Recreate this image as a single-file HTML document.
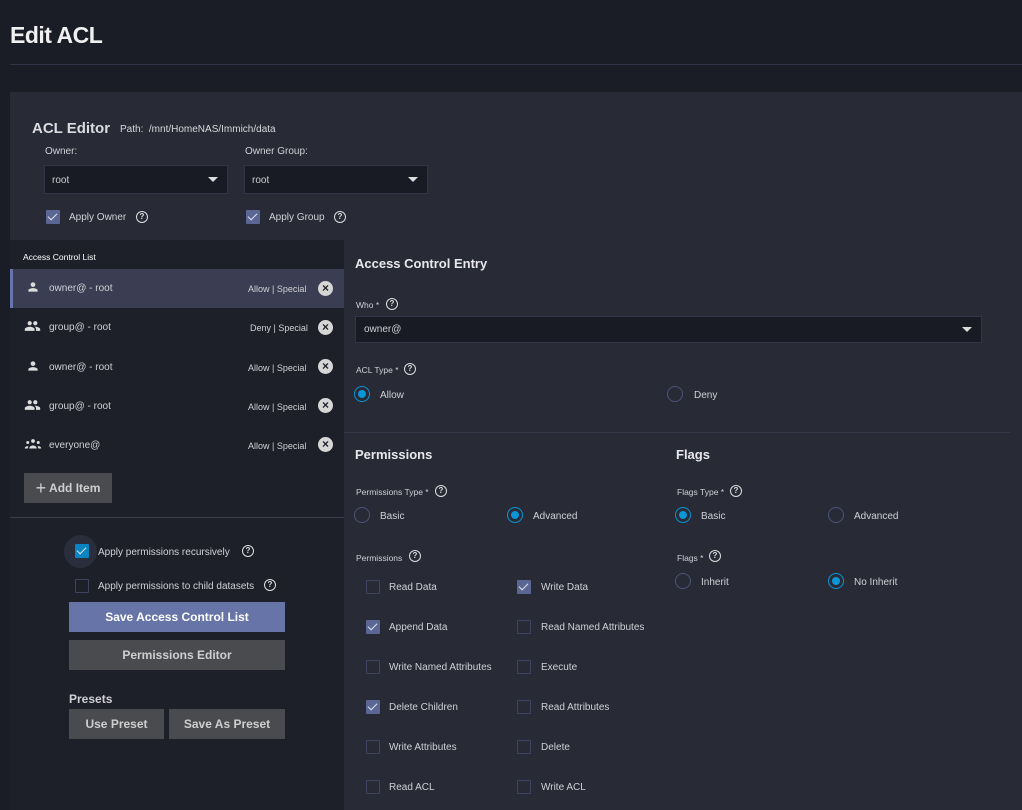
<!DOCTYPE html>
<html><head><meta charset="utf-8"><style>
*{box-sizing:border-box;margin:0;padding:0}
body{width:1022px;height:810px;background:#1a1c26;font-family:"Liberation Sans",sans-serif;color:#d8d8dc;position:relative;overflow:hidden;font-size:10px}
.a{position:absolute}
.t{position:absolute;white-space:nowrap}
.lbl,.sm{margin-top:1px}
.cb{position:absolute;width:14px;height:14px;border:1.5px solid #3e4461;border-radius:1px}
.cb.on{background:#5a6693;border-color:#5a6693}
.cb.on::after{content:"";position:absolute;left:3px;top:0px;width:4px;height:8px;border:solid #e0e4f0;border-width:0 1.5px 1.5px 0;transform:rotate(45deg)}
.rd{position:absolute;width:16px;height:16px;border:1.5px solid #4d5478;border-radius:50%;margin-top:-1px}
.rd.on{border-color:#0a95d6}
.rd.on::after{content:"";position:absolute;left:2.5px;top:2.5px;width:8px;height:8px;border-radius:50%;background:#0a95d6}
.q{position:absolute;width:12px;height:12px;border:1.3px solid #ddd;border-radius:50%;font-size:8px;line-height:10px;text-align:center;color:#ddd;font-weight:bold}
.sel{position:absolute;background:#181a24;border:1px solid #33364a}
.arr{position:absolute;width:0;height:0;border-left:5px solid transparent;border-right:5px solid transparent;border-top:5px solid #ddd}
.x{position:absolute;width:15px;height:15px;border-radius:50%;background:#d6d6d6;color:#1e2029;font-size:12px;font-weight:bold;text-align:center;line-height:15px}
.btn{position:absolute;background:#4a4b4f;color:#cfcfcf;font-weight:bold;font-size:12px;text-align:center}
.lbl{font-size:11px;color:#d0d0d6}
.h{font-weight:bold;font-size:13px;color:#e8e8ec}
.sm{font-size:9px;color:#d0d0d6}
</style></head><body>
<div class="t" style="left:10px;top:22px;font-size:23px;font-weight:bold;color:#f0f0f0;letter-spacing:-0.5px">Edit ACL</div>
<div class="a" style="left:10px;top:64px;right:0;height:1px;background:#32354a"></div>
<div class="a" style="left:10px;top:92px;right:0;bottom:0;background:#282a36"></div>

<div class="t" style="left:32px;top:120px;font-size:15px;font-weight:bold;color:#dcdce0">ACL Editor</div>
<div class="t" style="left:120px;top:124px;font-size:10px;color:#d8d8dc">Path:&nbsp; /mnt/HomeNAS/Immich/data</div>
<div class="t sm" style="left:45px;top:145px;font-size:10px">Owner:</div>
<div class="t sm" style="left:245px;top:145px;font-size:10px">Owner Group:</div>
<div class="sel" style="left:44px;top:165px;width:184px;height:29px"></div>
<div class="t lbl" style="left:52px;top:174px;font-size:10px">root</div>
<div class="arr" style="left:208px;top:177px"></div>
<div class="sel" style="left:244px;top:165px;width:184px;height:29px"></div>
<div class="t lbl" style="left:252px;top:174px;font-size:10px">root</div>
<div class="arr" style="left:408px;top:177px"></div>
<div class="cb on" style="left:46px;top:210px"></div>
<div class="t lbl" style="left:69px;top:211px;font-size:10px">Apply Owner</div>
<div class="q" style="left:136px;top:211px">?</div>
<div class="cb on" style="left:246px;top:210px"></div>
<div class="t lbl" style="left:269px;top:211px;font-size:10px">Apply Group</div>
<div class="q" style="left:334px;top:211px">?</div>

<div class="a" style="left:10px;top:240px;width:334px;height:570px;background:#1e2029"></div>
<div class="t" style="left:23px;top:252px;font-size:8.5px;color:#fff">Access Control List</div>
<div class="a" style="left:10px;top:269px;width:334px;height:39px;background:#3b3e52;border-left:3px solid #6675ad"></div>
<svg class="a" style="left:26px;top:280px" width="14" height="14" viewBox="0 0 24 24" fill="#ddd"><path d="M12 12c2.2 0 4-1.8 4-4s-1.8-4-4-4-4 1.8-4 4 1.8 4 4 4zm0 2c-2.7 0-8 1.3-8 4v2h16v-2c0-2.7-5.3-4-8-4z"/></svg>
<div class="t lbl" style="left:49px;top:282px;font-size:10px">owner@ - root</div>
<div class="t sm" style="left:248px;top:283px">Allow | Special</div><div class="x" style="left:318px;top:281px">×</div>

<svg class="a" style="left:24px;top:319px" width="17" height="14" viewBox="0 0 24 20" fill="#ddd"><path d="M16 9c1.7 0 3-1.3 3-3s-1.3-3-3-3-3 1.3-3 3 1.3 3 3 3zm-8 0c1.7 0 3-1.3 3-3S9.7 3 8 3 5 4.3 5 6s1.3 3 3 3zm0 2c-2.3 0-7 1.2-7 3.5V17h14v-2.5C15 12.2 10.3 11 8 11zm8 0c-.3 0-.6 0-1 .1 1.2.8 2 1.9 2 3.4V17h6v-2.5c0-2.3-4.7-3.5-7-3.5z"/></svg>
<div class="t lbl" style="left:49px;top:321px;font-size:10px">group@ - root</div>
<div class="t sm" style="left:250px;top:322px">Deny | Special</div><div class="x" style="left:318px;top:320px">×</div>

<svg class="a" style="left:26px;top:359px" width="14" height="14" viewBox="0 0 24 24" fill="#ddd"><path d="M12 12c2.2 0 4-1.8 4-4s-1.8-4-4-4-4 1.8-4 4 1.8 4 4 4zm0 2c-2.7 0-8 1.3-8 4v2h16v-2c0-2.7-5.3-4-8-4z"/></svg>
<div class="t lbl" style="left:49px;top:361px;font-size:10px">owner@ - root</div>
<div class="t sm" style="left:248px;top:362px">Allow | Special</div><div class="x" style="left:318px;top:359px">×</div>

<svg class="a" style="left:24px;top:398px" width="17" height="14" viewBox="0 0 24 20" fill="#ddd"><path d="M16 9c1.7 0 3-1.3 3-3s-1.3-3-3-3-3 1.3-3 3 1.3 3 3 3zm-8 0c1.7 0 3-1.3 3-3S9.7 3 8 3 5 4.3 5 6s1.3 3 3 3zm0 2c-2.3 0-7 1.2-7 3.5V17h14v-2.5C15 12.2 10.3 11 8 11zm8 0c-.3 0-.6 0-1 .1 1.2.8 2 1.9 2 3.4V17h6v-2.5c0-2.3-4.7-3.5-7-3.5z"/></svg>
<div class="t lbl" style="left:49px;top:400px;font-size:10px">group@ - root</div>
<div class="t sm" style="left:248px;top:401px">Allow | Special</div><div class="x" style="left:318px;top:398px">×</div>

<svg class="a" style="left:24px;top:438px" width="18" height="12" viewBox="0 0 24 16" fill="#ddd"><circle cx="12" cy="4" r="2.5"/><circle cx="5" cy="6" r="2"/><circle cx="19" cy="6" r="2"/><path d="M7 14c0-2.5 2.5-4 5-4s5 1.5 5 4zM1 14c0-1.6 1.5-3 3.5-3 1 0 1.5.3 1.5.3C5.5 12 5 13 5 14zM23 14c0-1.6-1.5-3-3.5-3-1 0-1.5.3-1.5.3.5.7 1 1.7 1 2.7z"/></svg>
<div class="t lbl" style="left:49px;top:439px;font-size:10px">everyone@</div>
<div class="t sm" style="left:248px;top:440px">Allow | Special</div><div class="x" style="left:318px;top:437px">×</div>

<div class="btn" style="left:24px;top:473px;width:88px;height:30px;line-height:30px;font-size:12px"><span style="font-size:18px;font-weight:normal;vertical-align:-2px">+</span> Add Item</div>
<div class="a" style="left:10px;top:517px;width:334px;height:1px;background:#3a3d4e"></div>

<div class="a" style="left:64px;top:535px;width:33px;height:33px;border-radius:50%;background:#2a2d3c"></div>
<div class="cb" style="left:75px;top:544px;background:#0a84c2;border-color:#0a84c2"></div>
<div class="a" style="left:79px;top:545px;width:5px;height:9px;border:solid #e0e4f0;border-width:0 1.5px 1.5px 0;transform:rotate(45deg)"></div>
<div class="t lbl" style="left:98px;top:546px;font-size:10px">Apply permissions recursively</div>
<div class="q" style="left:242px;top:545px">?</div>
<div class="cb" style="left:75px;top:579px"></div>
<div class="t lbl" style="left:98px;top:580px;font-size:10px">Apply permissions to child datasets</div>
<div class="q" style="left:264px;top:579px">?</div>
<div class="btn" style="left:69px;top:602px;width:216px;height:30px;line-height:30px;background:#6674a8;color:#fff">Save Access Control List</div>
<div class="btn" style="left:69px;top:640px;width:216px;height:30px;line-height:30px">Permissions Editor</div>
<div class="t" style="left:69px;top:692px;font-size:12px;font-weight:bold;color:#d0d0d6">Presets</div>
<div class="btn" style="left:69px;top:709px;width:95px;height:30px;line-height:30px">Use Preset</div>
<div class="btn" style="left:169px;top:709px;width:116px;height:30px;line-height:30px">Save As Preset</div>

<div class="t h" style="left:355px;top:256px">Access Control Entry</div>
<div class="t sm" style="left:356px;top:299px;font-size:8.5px">Who *</div>
<div class="q" style="left:386px;top:298px">?</div>
<div class="sel" style="left:355px;top:316px;width:627px;height:27px"></div>
<div class="t lbl" style="left:364px;top:323px;font-size:10px">owner@</div>
<div class="arr" style="left:962px;top:327px"></div>
<div class="t sm" style="left:356px;top:364px;font-size:8.5px">ACL Type *</div>
<div class="q" style="left:404px;top:363px">?</div>
<div class="rd on" style="left:354px;top:387px"></div>
<div class="t lbl" style="left:380px;top:389px;font-size:10px">Allow</div>
<div class="rd" style="left:667px;top:387px"></div>
<div class="t lbl" style="left:694px;top:389px;font-size:10px">Deny</div>
<div class="a" style="left:344px;top:432px;width:666px;height:1px;background:#363949"></div>

<div class="t h" style="left:355px;top:447px">Permissions</div>
<div class="t sm" style="left:356px;top:486px;font-size:8.5px">Permissions Type *</div>
<div class="q" style="left:435px;top:485px">?</div>
<div class="rd" style="left:354px;top:508px"></div>
<div class="t lbl" style="left:380px;top:510px;font-size:10px">Basic</div>
<div class="rd on" style="left:507px;top:508px"></div>
<div class="t lbl" style="left:533px;top:510px;font-size:10px">Advanced</div>
<div class="t sm" style="left:356px;top:552px;font-size:8.5px">Permissions</div>
<div class="q" style="left:409px;top:550px">?</div>

<div class="cb" style="left:366px;top:580px"></div><div class="t lbl" style="left:389px;top:581px;font-size:10px">Read Data</div>
<div class="cb on" style="left:517px;top:580px"></div><div class="t lbl" style="left:541px;top:581px;font-size:10px">Write Data</div>
<div class="cb on" style="left:366px;top:620px"></div><div class="t lbl" style="left:389px;top:621px;font-size:10px">Append Data</div>
<div class="cb" style="left:517px;top:620px"></div><div class="t lbl" style="left:541px;top:621px;font-size:10px">Read Named Attributes</div>
<div class="cb" style="left:366px;top:660px"></div><div class="t lbl" style="left:389px;top:661px;font-size:10px">Write Named Attributes</div>
<div class="cb" style="left:517px;top:660px"></div><div class="t lbl" style="left:541px;top:661px;font-size:10px">Execute</div>
<div class="cb on" style="left:366px;top:700px"></div><div class="t lbl" style="left:389px;top:701px;font-size:10px">Delete Children</div>
<div class="cb" style="left:517px;top:700px"></div><div class="t lbl" style="left:541px;top:701px;font-size:10px">Read Attributes</div>
<div class="cb" style="left:366px;top:740px"></div><div class="t lbl" style="left:389px;top:741px;font-size:10px">Write Attributes</div>
<div class="cb" style="left:517px;top:740px"></div><div class="t lbl" style="left:541px;top:741px;font-size:10px">Delete</div>
<div class="cb" style="left:366px;top:780px"></div><div class="t lbl" style="left:389px;top:781px;font-size:10px">Read ACL</div>
<div class="cb" style="left:517px;top:780px"></div><div class="t lbl" style="left:541px;top:781px;font-size:10px">Write ACL</div>

<div class="t h" style="left:676px;top:447px">Flags</div>
<div class="t sm" style="left:677px;top:486px;font-size:8.5px">Flags Type *</div>
<div class="q" style="left:730px;top:485px">?</div>
<div class="rd on" style="left:675px;top:508px"></div>
<div class="t lbl" style="left:701px;top:510px;font-size:10px">Basic</div>
<div class="rd" style="left:828px;top:508px"></div>
<div class="t lbl" style="left:854px;top:510px;font-size:10px">Advanced</div>
<div class="t sm" style="left:677px;top:552px;font-size:8.5px">Flags *</div>
<div class="q" style="left:709px;top:550px">?</div>
<div class="rd" style="left:675px;top:574px"></div>
<div class="t lbl" style="left:701px;top:576px;font-size:10px">Inherit</div>
<div class="rd on" style="left:828px;top:574px"></div>
<div class="t lbl" style="left:854px;top:576px;font-size:10px">No Inherit</div>
</body></html>
